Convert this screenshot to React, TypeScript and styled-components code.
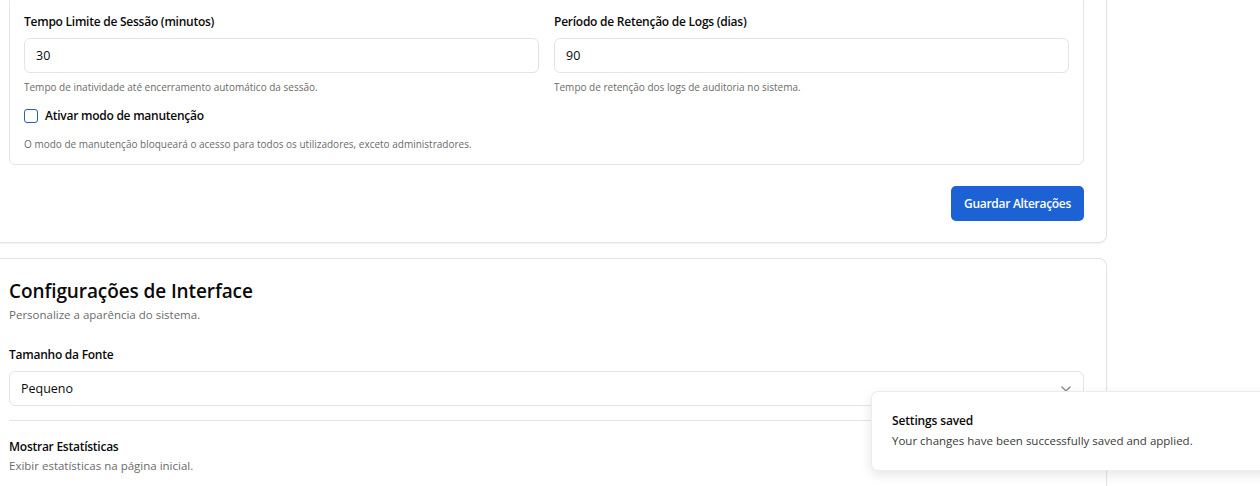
import React from "react";
import styled, { createGlobalStyle } from "styled-components";

const GlobalStyle = createGlobalStyle`
  html, body { margin: 0; padding: 0; background: #ffffff; overflow: hidden; }
  body { font-family: "Open Sans", "Noto Sans", sans-serif; color: #0a0a0a; }
  * { box-sizing: border-box; }
`;

const Page = styled.div`
  width: 1260px;
  height: 486px;
  position: relative;
  overflow: hidden;
`;

const Column = styled.div`
  width: 1123px;
  margin: -27px 0 0 -16px;
  display: flex;
  flex-direction: column;
  gap: 15px;
`;

const Card = styled.section<{ $top?: number }>`
  background: #fff;
  border: 1px solid #e4e4e7;
  border-radius: 8px;
  box-shadow: 0 1px 2px rgba(0, 0, 0, 0.06);
  padding: ${(p) => p.$top ?? 22}px 22px 21px 24px;
  display: flex;
  flex-direction: column;
`;

const InnerBox = styled.div`
  border: 1px solid #e4e4e7;
  border-radius: 6px;
  padding: 17px 14px 13px 14px;
  display: flex;
  flex-direction: column;
`;

const Grid = styled.div`
  display: grid;
  grid-template-columns: 1fr 1fr;
  column-gap: 15px;
`;

const Field = styled.div`
  display: flex;
  flex-direction: column;
`;

const Label = styled.label`
  font-size: 12px;
  font-weight: 600;
  line-height: 16px;
  letter-spacing: -0.25px;
  color: #0a0a0a;
`;

const Input = styled.div<{ $mt?: number }>`
  height: 35px;
  margin-top: ${(p) => p.$mt ?? 8}px;
  border: 1px solid #e4e4e7;
  border-radius: 6px;
  padding: 0 9px 0 11px;
  display: flex;
  align-items: center;
  justify-content: space-between;
  font-size: 12.5px;
  color: #0a0a0a;
`;

const Help = styled.p<{ $mt?: number }>`
  margin: ${(p) => p.$mt ?? 7}px 0 0 0;
  font-size: 10px;
  line-height: 14px;
  color: #6b6b6b;
`;

const CheckRow = styled.div`
  margin-top: 14px;
  display: flex;
  align-items: center;
  gap: 7px;
`;

const CheckBox = styled.span`
  width: 14px;
  height: 14px;
  border: 1.5px solid #2b5fb8;
  border-radius: 3px;
  display: inline-block;
`;

const CheckLabel = styled.span`
  font-size: 12px;
  font-weight: 600;
  line-height: 16px;
  letter-spacing: -0.25px;
`;

const Actions = styled.div`
  margin-top: 21px;
  display: flex;
  justify-content: flex-end;
`;

const PrimaryButton = styled.button`
  height: 35px;
  padding: 0 13px;
  border: none;
  border-radius: 5px;
  background: #1c62d5;
  color: #fff;
  font-family: inherit;
  font-size: 12px;
  font-weight: 600;
  letter-spacing: -0.3px;
`;

const Title = styled.h2`
  margin: 0;
  font-size: 19px;
  font-weight: 600;
  line-height: 28px;
  letter-spacing: -0.1px;
  color: #0a0a0a;
`;

const Subtitle = styled.p`
  margin: 2px 0 0 0;
  font-size: 11.5px;
  line-height: 16px;
  color: #6b6b6b;
`;

const Section = styled.div<{ $mt: number }>`
  margin-top: ${(p) => p.$mt}px;
  display: flex;
  flex-direction: column;
`;

const Divider = styled.hr`
  margin: 14px 0 0 0;
  border: none;
  border-top: 1px solid #e4e4e7;
`;

const SmallDesc = styled.p`
  margin: 3px 0 0 0;
  font-size: 11.5px;
  line-height: 16px;
  color: #6b6b6b;
`;

const Toast = styled.div`
  position: absolute;
  left: 871px;
  top: 391px;
  width: 420px;
  height: 80px;
  background: #fff;
  border: 1px solid #ececec;
  border-radius: 7px;
  box-shadow: 0 4px 12px rgba(0, 0, 0, 0.1);
  padding: 21px 20px;
  display: flex;
  flex-direction: column;
  gap: 4px;
`;

const ToastTitle = styled.div`
  font-size: 12px;
  font-weight: 600;
  line-height: 16px;
  letter-spacing: -0.15px;
  color: #0a0a0a;
`;

const ToastDesc = styled.div`
  font-size: 11.5px;
  line-height: 16px;
  color: #3a3a3a;
`;

const Chevron = () => (
  <svg width="16" height="16" viewBox="0 0 24 24" fill="none" stroke="#8a8a8a" strokeWidth="2" strokeLinecap="round" strokeLinejoin="round">
    <path d="m6 9 6 6 6-6" />
  </svg>
);

export default function App() {
  return (
    <Page>
      <GlobalStyle />
      <Column>
        <Card>
          <InnerBox>
            <Grid>
              <Field>
                <Label>Tempo Limite de Sessão (minutos)</Label>
                <Input>30</Input>
                <Help>Tempo de inatividade até encerramento automático da sessão.</Help>
              </Field>
              <Field>
                <Label>Período de Retenção de Logs (dias)</Label>
                <Input>90</Input>
                <Help>Tempo de retenção dos logs de auditoria no sistema.</Help>
              </Field>
            </Grid>
            <CheckRow>
              <CheckBox />
              <CheckLabel>Ativar modo de manutenção</CheckLabel>
            </CheckRow>
            <Help $mt={13}>O modo de manutenção bloqueará o acesso para todos os utilizadores, exceto administradores.</Help>
          </InnerBox>
          <Actions>
            <PrimaryButton>Guardar Alterações</PrimaryButton>
          </Actions>
        </Card>
        <Card $top={18}>
          <Title>Configurações de Interface</Title>
          <Subtitle>Personalize a aparência do sistema.</Subtitle>
          <Section $mt={24}>
            <Label>Tamanho da Fonte</Label>
            <Input $mt={8}>
              Pequeno
              <Chevron />
            </Input>
          </Section>
          <Divider />
          <Section $mt={18}>
            <Label>Mostrar Estatísticas</Label>
            <SmallDesc>Exibir estatísticas na página inicial.</SmallDesc>
          </Section>
        </Card>
      </Column>
      <Toast>
        <ToastTitle>Settings saved</ToastTitle>
        <ToastDesc>Your changes have been successfully saved and applied.</ToastDesc>
      </Toast>
    </Page>
  );
}
